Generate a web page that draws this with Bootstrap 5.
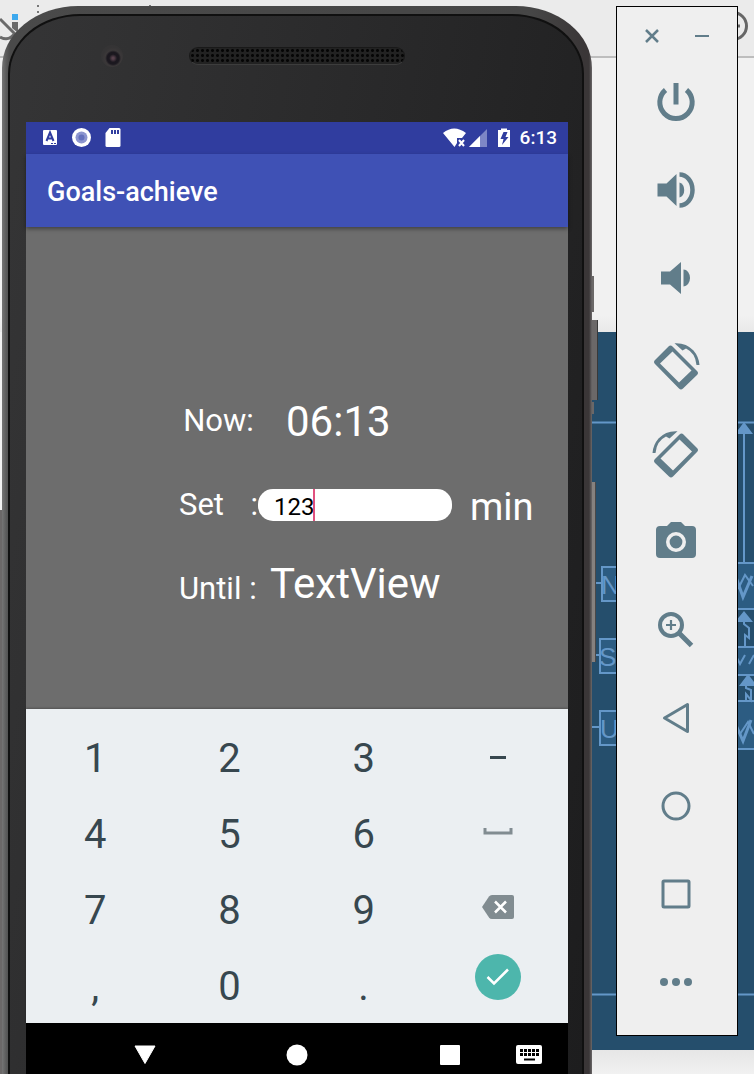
<!DOCTYPE html>
<html lang="en">
<head>
<meta charset="utf-8">
<meta name="viewport" content="width=device-width, initial-scale=1">
<title>Goals-achieve</title>
<link href="https://cdn.jsdelivr.net/npm/bootstrap@5.3.0/dist/css/bootstrap.min.css" rel="stylesheet">
<style>
  body { font-family: Roboto, "Liberation Sans", sans-serif; background: #f1f1f1; }
  svg { display: block; flex: none; }
  .desk { min-height: 100vh; }
  /* windows behind the emulator */
  .ide-bar { height: 58px; background: #ebebeb; border-bottom: 2px solid #bdbdbd; }
  .ide-gap { height: 274px; background: linear-gradient(#f1f1f1 94%, #e9e9e9); }
  .ide-foot { height: 24px; background: linear-gradient(#e6e6e6, #f1f1f1); }
  .blueprint { height: 718px; background: #254e6c; margin-left: 10px; }
  .stage { padding: 6px 16px 0 2px; gap: 24px; }
  /* device */
  .phone { padding: 8px 8px 0 6px; border-radius: 76px 76px 0 0 / 62px 62px 0 0;
    background: linear-gradient(90deg, #757575 0, #5c5c5c 4px, #4a4a4a 8px, #464646 calc(100% - 60px), #3a3637 calc(100% - 8px), #3a3637 calc(100% - 3px), #6b6869 100%); }
  .face { border: 2px solid #101010; border-bottom: 0; padding: 0 14px 0 16px; border-radius: 72px 72px 0 0 / 60px 60px 0 0;
    background: linear-gradient(100deg, #353536, #29292a 50%, #1d1d1e); }
  .face-top { height: 106px; display: grid; grid-template-columns: 1fr 216px 1fr; padding-top: 31px; }
  .lens { width: 22px; height: 22px; margin: -2px 0 0 8px; border-radius: 50%; background: radial-gradient(circle at 55% 60%, #57414c 0 1px, #1b181f 4px 6px, #3b3839 8px, #353435 11px); }
  .speaker { height: 18px; border-radius: 9px; border: 1px solid #191919; border-bottom-color: #3d3d3d;
    background: radial-gradient(circle, #050505 1px, #222 2px) 0 0 / 5px 5px; }
  .side-key { width: 2px; background: #6b6868; }
  .k1 { left: 100%; top: 270px; height: 36px; }
  .k2 { left: 100%; top: 314px; height: 80px; width: 6px; border-right: 1px solid #393939; }
  .k3 { left: 100%; top: 396px; height: 12px; }
  .k4 { left: 100%; top: 476px; height: 180px; width: 4px; background: #85817f; border-right: 1px solid #4a4848; }
  .k5 { right: 100%; top: 504px; bottom: 0; }
  /* app */
  .status { height: 32px; background: #303d9f; padding: 0 11px 0 15px; font-size: 19px; font-weight: 500; }
  .appbar { height: 73px; background: #3f51b5; padding: 3px 0 0 21px; font-size: 27px; font-weight: 500; position: relative; box-shadow: 0 2px 4px rgba(0,0,0,.4); }
  .view { height: 482px; background: #6d6d6d; padding: 152px 0 0 153px; }
  .view-row { height: 84px; display: flex; align-items: center; }
  .tag { width: 79px; font-size: 31px; white-space: pre; flex: none; }
  .value { font-size: 42px; }
  .unit { font-size: 38px; margin-left: 18px; padding-top: 5px; }
  .minutes { width: 194px; height: 32px; border: 0; border-radius: 15px; background: #fff; color: #000; font-size: 24px; padding: 3px 16px 0; outline: 0; }
  .caret { left: 55px; top: 0; bottom: 0; width: 2px; background: #e0517f; }
  .pad { background: #ebeff2; padding: 10px 3px 0 2px; display: grid; grid-template-columns: repeat(4, 1fr); grid-auto-rows: 76px; box-shadow: 0 -1px 2px rgba(0,0,0,.25); position: relative; }
  .key { border: 0; background: none; padding: 3px 0 0; color: #37474f; font-size: 40px; line-height: 73px; display: flex; align-items: center; justify-content: center; }
  .icon-key { padding: 0; }
  .ok-dot { width: 46px; height: 46px; background: #4db6ac; margin-bottom: 16px; }
  .softkeys { height: 51px; background: #000; display: grid; grid-template-columns: 127fr 178fr 127fr 30fr; padding: 12px 24px 0 55px; }
  .plain { border: 0; background: none; padding: 0; display: flex; align-items: center; justify-content: center; color: #fff; }
  /* emulator toolbar */
  .tools { width: 122px; height: 1030px; border: 1px solid #000; background: #efefef; flex: none; }
  .tools .plain { color: #617d8a; }
  .tools-head { height: 51px; padding: 7px 10px 0; }
  .tools-head .plain { width: 50px; }
  .tools .tool { height: 88px; padding-right: 2px; }
</style>
</head>
<body>
<div class="desk position-relative overflow-hidden">

  <div class="position-absolute top-0 start-0 w-100" aria-hidden="true">
    <div class="ide-bar d-flex justify-content-between">
      <svg width="160" height="44">
        <path d="M0 19 15 34M0 37Q9 42 15 33" fill="none" stroke="#6a6a6a" stroke-width="3"/>
        <path d="M12 14h6v6h-6z" fill="#3da9ee"/><path d="M12 22h6v11l-6-5z" fill="#6a6a6a"/>
        <path d="M37 5h2v2h-2zM37 11h2v2h-2zM149 5h2v2h-2z" fill="#777"/>
      </svg>
      <svg width="40" height="44"><circle cx="19" cy="26" r="13.500" fill="none" stroke="#666" stroke-width="3"/><path d="M12 26h14M19 19v14" stroke="#666" stroke-width="3"/></svg>
    </div>
    <div class="ide-gap"></div>
    <div class="blueprint d-flex justify-content-end">
      <svg width="174" height="718" fill="none" stroke="#6497c8" stroke-width="2" font-family="Liberation Sans, sans-serif" font-size="26">
        <path d="M0 90.500H174M0 662.500H174"/>
        <g fill="#2c5c82"><path d="M22 235h40v34H22zM20 307h40v34H20zM20 379h40v34H20zM150 231h40v46h-40zM150 315h40v28h-40zM150 369h40v48h-40z"/></g>
        <path d="M14 251h8M14 323h6M12 395h8M164 92v139M164 285v7l5 4v10l-4-3v12M166 350v6l5 2v10l-5-6v8"/>
        <g fill="#6497c8" stroke="none"><path d="M164 90l9 12h-18zM164 279l9 11h-18zM168 342l9 12h-18z"/>
          <text x="21" y="262">N</text><text x="19" y="334">S</text><text x="20" y="406">U</text></g>
        <path d="M156 245l7 20 9-21M156 393l7 16 8-21" stroke-width="3"/>
        <path d="M158 257l7-14 8 11M156 324l4 8 5-9M169 332l5-9M160 402l8-12 6 12"/>
      </svg>
    </div>
    <div class="ide-foot"></div>
  </div>

  <div class="stage d-flex align-items-start position-relative">
    <main class="phone flex-grow-1 position-relative">
      <span class="side-key k1 position-absolute"></span><span class="side-key k2 position-absolute"></span>
      <span class="side-key k3 position-absolute"></span><span class="side-key k4 position-absolute"></span>
      <span class="side-key k5 position-absolute"></span>
      <div class="face position-relative">
        <div class="face-top">
          <div class="d-flex justify-content-center"><div class="lens"></div></div>
          <div class="speaker"></div>
        </div>

        <div class="status d-flex align-items-center text-white">
          <div class="d-flex align-items-center flex-grow-1">
            <svg width="80" height="22" fill="#fff">
              <rect x="2" y="3" width="14" height="15" rx="1"/><path d="M5.500 14 9 5.500 12.500 14M7 11.500h4" stroke="#303d9f" stroke-width="2" fill="none"/><path d="M10 16.500h5" stroke="#303d9f" stroke-dasharray="2 1"/>
              <circle cx="40.500" cy="10.500" r="9.500"/><circle cx="40.500" cy="10.500" r="6" fill="#8c95cf"/><circle cx="40.500" cy="10.500" r="3" fill="#6470bc"/>
              <path d="M68.500 1h9.500q1.500 0 1.500 1.500v16q0 1.500-1.500 1.500h-12q-1.500 0-1.500-1.500V6z"/><path d="M71 3v4M74 3v4M77 3v4" stroke="#303d9f" stroke-width="2"/>
            </svg>
          </div>
          <svg class="me-2" width="70" height="22" fill="#fff">
            <path d="M1 6Q12-3 24 6L20 11h-5v5l-2.500 4z"/><path d="M17 13l5 6M22 13l-5 6" stroke="#fff" stroke-width="2"/>
            <path d="M27 20 45 2v18z" fill="#7d86c6"/><path d="M27 20 38 9v11z"/>
            <path d="M56 3h3V1.500h6V3h3v17H56z"/><path d="M61.500 5h4l-2 5h3L60 18l1.500-6H58.500z" fill="#303d9f"/>
          </svg>
          <span>6:13</span>
        </div>
        <header class="appbar d-flex align-items-center text-white">Goals-achieve</header>

        <form class="view text-white">
          <div class="view-row"><span class="tag text-center">Now:</span><span class="value ps-4 ms-1">06:13</span></div>
          <div class="view-row">
            <label class="tag d-flex justify-content-between" for="mins"><span>Set</span><span>:</span></label>
            <div class="position-relative"><input class="minutes d-block" id="mins" type="text" value="123"><span class="caret position-absolute"></span></div>
            <span class="unit">min</span>
          </div>
          <div class="view-row"><span class="tag">Until :</span><span class="value ps-2 ms-1 pb-2 mb-1">TextView</span></div>
        </form>

        <div class="pad">
          <button class="key">1</button><button class="key">2</button><button class="key">3</button>
          <button class="key icon-key" aria-label="minus"><svg width="16" height="3"><path d="M0 0h16v3H0z" fill="#37474f"/></svg></button>
          <button class="key">4</button><button class="key">5</button><button class="key">6</button>
          <button class="key icon-key" aria-label="space"><svg class="mb-1" width="30" height="7"><path d="M2 0v5h26V0" fill="none" stroke="#818c91" stroke-width="3"/></svg></button>
          <button class="key">7</button><button class="key">8</button><button class="key">9</button>
          <button class="key icon-key" aria-label="delete"><svg class="mb-1" width="32" height="24"><path d="M0 12 7 1.500Q8 0 10 0h20q2 0 2 2v20q0 2-2 2H10q-2 0-3-1.500z" fill="#818c91"/><path d="M13 6.500l11 11M24 6.500l-11 11" stroke="#fff" stroke-width="2.500"/></svg></button>
          <button class="key">,</button><button class="key">0</button><button class="key">.</button>
          <button class="key icon-key" aria-label="done"><span class="ok-dot rounded-circle d-flex align-items-center justify-content-center"><svg width="24" height="18"><path d="M1.500 9 8 15.500 22 1.500" fill="none" stroke="#fff" stroke-width="2.500"/></svg></span></button>
        </div>

        <nav class="softkeys">
          <button class="plain" aria-label="back"><svg width="22" height="20"><path d="M1 1h20L11 18.500z" fill="#fff" stroke="#fff" stroke-linejoin="round"/></svg></button>
          <button class="plain" aria-label="home"><svg width="22" height="22"><circle cx="11" cy="11" r="10.500" fill="#fff"/></svg></button>
          <button class="plain" aria-label="recent apps"><svg width="20" height="20"><rect width="20" height="20" rx="1" fill="#fff"/></svg></button>
          <button class="plain" aria-label="keyboard"><svg width="26" height="19"><rect width="26" height="19" rx="2" fill="#fff"/><path d="M4 5.500h19M4 9.500h19" stroke="#000" stroke-width="3" stroke-dasharray="3 1"/><path d="M8 14.500h11" stroke="#000" stroke-width="2"/></svg></button>
        </nav>
      </div>
    </main>

    <aside class="tools d-flex flex-column">
      <div class="tools-head d-flex">
        <button class="plain" aria-label="close"><svg width="14" height="14"><path d="M1 1l12 12M13 1 1 13" stroke="currentColor" stroke-width="2.500"/></svg></button>
        <button class="plain" aria-label="minimize"><svg width="14" height="2"><path d="M0 0h14v2H0z" fill="currentColor"/></svg></button>
      </div>
      <button class="plain tool" aria-label="power"><svg width="48" height="48" fill="none" stroke="currentColor" stroke-width="5"><path d="M13.500 12A16.200 16.200 0 1 0 34.500 12M24 5v21.500"/></svg></button>
      <button class="plain tool" aria-label="volume up"><svg width="48" height="48" fill="currentColor"><path d="M5.500 17.500h9l10-9.500v32l-10-9.500h-9z"/><path d="M27.500 16.500a6.500 7.800 0 0 1 0 15z"/><path d="M27.500 8.500a13 15.500 0 0 1 0 31" fill="none" stroke="currentColor" stroke-width="4.500"/></svg></button>
      <button class="plain tool" aria-label="volume down"><svg width="48" height="48" fill="currentColor"><path d="M9 17.500h9L29 8v32l-11-9.500H9z"/><path d="M31.500 15.500a6.500 8.500 0 0 1 0 17z"/></svg></button>
      <button class="plain tool" aria-label="rotate left"><svg width="48" height="48" fill="currentColor"><path fill-rule="evenodd" d="M16.500 4.500q2-2 4 0L45 29q2 2 0 4L31 46.500q-2 2-4 0L3 22q-2-2 0-4zM20.500 9.500 8 21.500 27 40.500l12.500-12z"/><path d="M22.500 1.200Q34 .5 41.500 8.500 47 15 47.500 23h-3Q43.500 11 34 6.500L30.500 8.500z"/></svg></button>
      <button class="plain tool" aria-label="rotate right"><svg width="48" height="48"><g transform="matrix(-1 0 0 1 48 0)" fill="currentColor"><path fill-rule="evenodd" d="M16.500 4.500q2-2 4 0L45 29q2 2 0 4L31 46.500q-2 2-4 0L3 22q-2-2 0-4zM20.500 9.500 8 21.500 27 40.500l12.500-12z"/><path d="M22.500 1.200Q34 .5 41.500 8.500 47 15 47.500 23h-3Q43.500 11 34 6.500L30.500 8.500z"/></g></svg></button>
      <button class="plain tool" aria-label="screenshot"><svg width="48" height="48" fill="currentColor"><path d="M8 8h7l4-4h10l4 4h7q4 0 4 4v24q0 4-4 4H8q-4 0-4-4V12q0-4 4-4z"/><circle cx="24" cy="24" r="8.200" stroke="#efefef" stroke-width="3.600"/></svg></button>
      <button class="plain tool" aria-label="zoom"><svg width="48" height="48" fill="none" stroke="currentColor"><circle cx="19" cy="19" r="11" stroke-width="4"/><path d="M27.500 27.500 39.500 39.500" stroke-width="5"/><path d="M14 19h10M19 14v10" stroke-width="2.200"/></svg></button>
      <button class="plain tool" aria-label="back"><svg width="48" height="48"><path d="M12.500 24 35.500 10.500v27z" fill="none" stroke="currentColor" stroke-width="3" stroke-linejoin="round"/></svg></button>
      <button class="plain tool" aria-label="home"><svg width="48" height="48"><circle cx="24" cy="24" r="13" fill="none" stroke="currentColor" stroke-width="3"/></svg></button>
      <button class="plain tool" aria-label="overview"><svg width="48" height="48"><rect x="11" y="11" width="26" height="26" rx="1" fill="none" stroke="currentColor" stroke-width="3"/></svg></button>
      <button class="plain tool" aria-label="more"><svg width="48" height="48" fill="currentColor"><circle cx="12" cy="24" r="4"/><circle cx="24" cy="24" r="4"/><circle cx="36" cy="24" r="4"/></svg></button>
    </aside>
  </div>
</div>
<script src="https://cdn.jsdelivr.net/npm/bootstrap@5.3.0/dist/js/bootstrap.bundle.min.js"></script>
</body>
</html>
